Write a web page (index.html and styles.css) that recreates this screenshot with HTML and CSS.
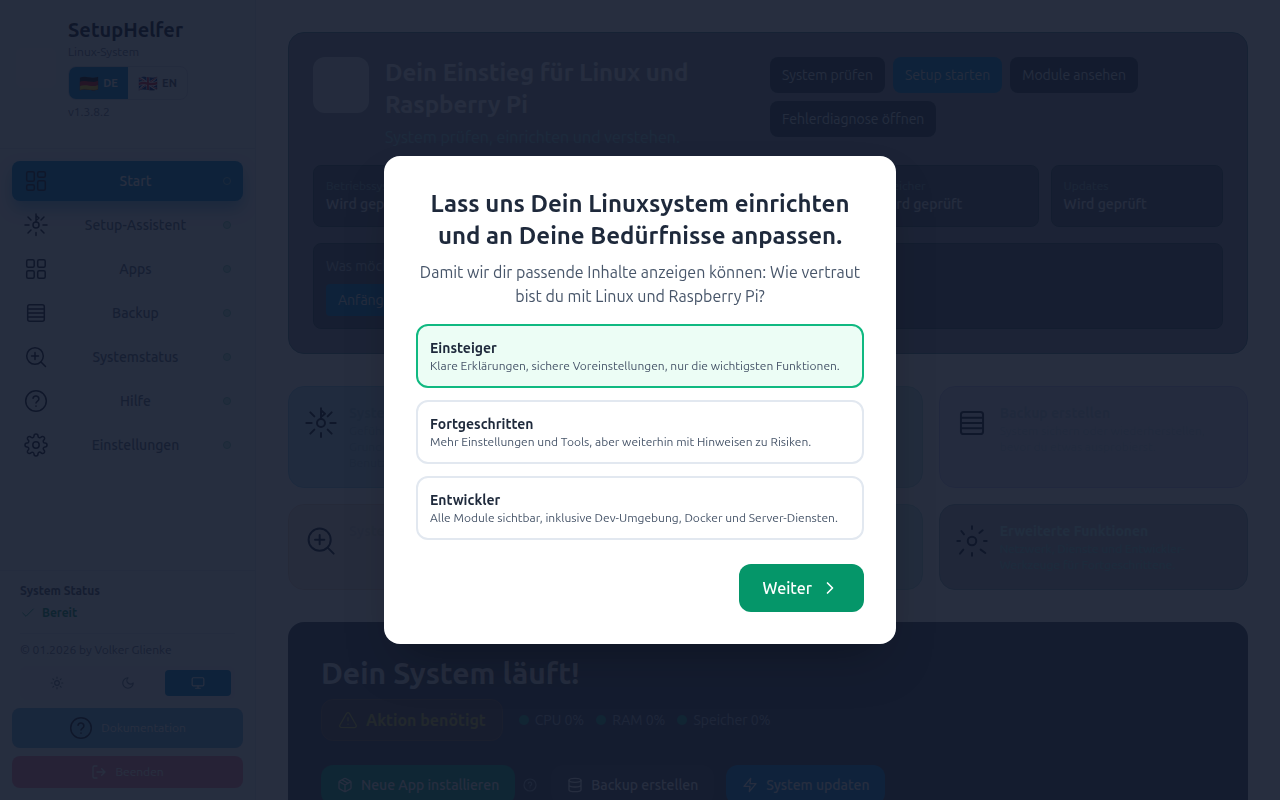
FILE: index.html
```html
<!DOCTYPE html>
<html lang="de">
<head>
<meta charset="UTF-8" />
<meta name="viewport" content="width=device-width, initial-scale=1" />
<title>SetupHelfer</title>
<link rel="stylesheet" href="styles.css">
</head>
<body>

<!-- shared icons -->
<svg class="sprite" aria-hidden="true">
  <symbol id="i-dashboard" viewBox="0 0 24 24"><rect x="2.7" y="2.7" width="7.6" height="9.6" rx="1.5"/><rect x="13.7" y="2.7" width="7.6" height="5.6" rx="1.5"/><rect x="13.7" y="11.7" width="7.6" height="9.6" rx="1.5"/><rect x="2.7" y="15.7" width="7.6" height="5.6" rx="1.5"/></symbol>
  <symbol id="i-wizard" viewBox="0 0 24 24"><circle cx="12" cy="12" r="3"/><path d="M12 1v8M12 2.500l3 2.500-3 2.500M12 19.500v3M1 12h4M19 12h4M4 4l3 3M20 4l-3 3M4 20l3-3M20 20l-3-3"/></symbol>
  <symbol id="i-apps" viewBox="0 0 24 24"><rect x="2.700" y="2.700" width="7.500" height="7.500" rx="1.500"/><rect x="13.700" y="2.700" width="7.500" height="7.500" rx="1.500"/><rect x="2.700" y="13.700" width="7.500" height="7.500" rx="1.500"/><rect x="13.700" y="13.700" width="7.500" height="7.500" rx="1.500"/></symbol>
  <symbol id="i-backup" viewBox="0 0 24 24"><rect x="3.700" y="3.700" width="16.600" height="16.600" rx="2"/><path d="M4 8h16M4 12h16M4 16h16"/></symbol>
  <symbol id="i-search" viewBox="0 0 24 24"><circle cx="11" cy="11" r="8.300"/><path d="M17 17l4.500 4.500M11 7.500v7M7.500 11h7"/></symbol>
  <symbol id="i-help" viewBox="0 0 24 24"><circle cx="12" cy="12" r="10.300"/><path d="M9 9.300a3 3 0 0 1 5.900.8c0 2-2.900 2.400-2.900 4M12 17v.2"/></symbol>
  <symbol id="i-gear" viewBox="0 0 24 24"><circle cx="12" cy="12" r="3.200"/><path d="M19.400 15a1.700 1.700 0 0 0 .3 1.800l.1.100a2 2 0 1 1-2.800 2.800l-.1-.1a1.700 1.700 0 0 0-2.900 1.200v.2a2 2 0 1 1-4 0v-.1a1.700 1.700 0 0 0-2.900-1.200l-.1.100a2 2 0 1 1-2.800-2.800l.1-.1A1.700 1.700 0 0 0 3.100 14H3a2 2 0 1 1 0-4h.1a1.700 1.700 0 0 0 1.200-2.900l-.1-.1A2 2 0 1 1 7 4.200l.1.100A1.700 1.700 0 0 0 10 3.100V3a2 2 0 1 1 4 0v.1a1.700 1.700 0 0 0 2.900 1.200l.1-.1A2 2 0 1 1 19.800 7l-.1.100a1.700 1.700 0 0 0 1.200 2.900h.1a2 2 0 1 1 0 4h-.1a1.700 1.700 0 0 0-1.500 1z"/></symbol>
  <symbol id="i-rays" viewBox="0 0 24 24"><circle cx="12" cy="12" r="3.200"/><path d="M12 1v2M12 21v2M1 12h2M21 12h2M4 4.500l2 2.500M20 4l-2.500 2M3 21.500l2.500-3M22 21l-3.500-2.500"/></symbol>
  <symbol id="i-check" viewBox="0 0 24 24"><path d="M20 6L9 17l-5-5"/></symbol>
  <symbol id="i-sun" viewBox="0 0 24 24"><circle cx="12" cy="12" r="4"/><path d="M12 2v2M12 20v2M4.900 4.900l1.400 1.400M17.700 17.700l1.400 1.400M2 12h2M20 12h2M6.300 17.700l-1.400 1.400M19.100 4.900l-1.400 1.400"/></symbol>
  <symbol id="i-moon" viewBox="0 0 24 24"><path d="M12 3a6 6 0 0 0 9 9 9 9 0 1 1-9-9z"/></symbol>
  <symbol id="i-monitor" viewBox="0 0 24 24"><rect x="2" y="3" width="20" height="14" rx="2"/><path d="M8 21h8M12 17v4"/></symbol>
  <symbol id="i-logout" viewBox="0 0 24 24"><path d="M9 21H5a2 2 0 0 1-2-2V5a2 2 0 0 1 2-2h4M16 17l5-5-5-5M21 12H9"/></symbol>
  <symbol id="i-warn" viewBox="0 0 24 24"><path d="M21.700 18l-8-14a2 2 0 0 0-3.400 0l-8 14A2 2 0 0 0 4 21h16a2 2 0 0 0 1.700-3zM12 9v4M12 17v.1"/></symbol>
  <symbol id="i-box" viewBox="0 0 24 24"><path d="M21 8a2 2 0 0 0-1-1.700l-7-4a2 2 0 0 0-2 0l-7 4A2 2 0 0 0 3 8v8a2 2 0 0 0 1 1.700l7 4a2 2 0 0 0 2 0l7-4a2 2 0 0 0 1-1.700zM3.300 7L12 12l8.700-5M12 22V12M7.500 4.300l9 5.100"/></symbol>
  <symbol id="i-database" viewBox="0 0 24 24"><ellipse cx="12" cy="5" rx="9" ry="3"/><path d="M3 5v14c0 1.700 4 3 9 3s9-1.300 9-3V5M3 12c0 1.700 4 3 9 3s9-1.300 9-3"/></symbol>
  <symbol id="i-bolt" viewBox="0 0 24 24"><path d="M13 2L3 14h9l-1 8 10-12h-9z"/></symbol>
  <symbol id="i-chevron" viewBox="0 0 24 24"><path d="M9 18l6-6-6-6"/></symbol>
</svg>

<div class="app">
  <aside class="sidebar">
    <header class="brand">
      <div class="brand-logo"></div>
      <div class="brand-info">
        <h1>SetupHelfer</h1>
        <p>Linux-System</p>
        <div class="lang">
          <button class="active"><span class="flag">🇩🇪</span>DE</button>
          <button><span class="flag">🇬🇧</span>EN</button>
        </div>
        <p>v1.3.8.2</p>
      </div>
    </header>

    <nav class="nav">
      <button class="active"><svg class="icon"><use href="#i-dashboard"/></svg><span>Start</span><i class="dot"></i></button>
      <button><svg class="icon"><use href="#i-wizard"/></svg><span>Setup-Assistent</span><i class="dot"></i></button>
      <button><svg class="icon"><use href="#i-apps"/></svg><span>Apps</span><i class="dot"></i></button>
      <button><svg class="icon"><use href="#i-backup"/></svg><span>Backup</span><i class="dot"></i></button>
      <button><svg class="icon"><use href="#i-search"/></svg><span>Systemstatus</span><i class="dot"></i></button>
      <button><svg class="icon"><use href="#i-help"/></svg><span>Hilfe</span><i class="dot"></i></button>
      <button><svg class="icon"><use href="#i-gear"/></svg><span>Einstellungen</span><i class="dot"></i></button>
    </nav>

    <footer class="side-footer">
      <div class="status">
        <strong>System Status</strong>
        <p class="ready"><svg class="icon"><use href="#i-check"/></svg>Bereit</p>
      </div>
      <p class="copyright">© 01.2026 by Volker Glienke</p>
      <div class="theme">
        <button aria-label="Hell"><svg class="icon"><use href="#i-sun"/></svg></button>
        <button aria-label="Dunkel"><svg class="icon"><use href="#i-moon"/></svg></button>
        <button aria-label="System" class="active"><svg class="icon"><use href="#i-monitor"/></svg></button>
      </div>
      <button class="docs"><svg class="icon"><use href="#i-help"/></svg>Dokumentation</button>
      <button class="quit"><svg class="icon"><use href="#i-logout"/></svg>Beenden</button>
    </footer>
  </aside>

  <main class="main">
    <section class="hero">
      <div class="hero-top">
        <div class="hero-intro">
          <div class="hero-logo"></div>
          <div>
            <h2>Dein Einstieg für Linux und Raspberry Pi</h2>
            <p>System prüfen, einrichten und verstehen.</p>
          </div>
        </div>
        <div class="hero-actions">
          <button>System prüfen</button>
          <button class="primary">Setup starten</button>
          <button>Module ansehen</button>
          <button>Fehlerdiagnose öffnen</button>
        </div>
      </div>
      <div class="stats">
        <div class="stat"><span>Betriebssystem</span><b>Wird geprüft</b></div>
        <div class="stat"><span>Netzwerk</span><b>Wird geprüft</b></div>
        <div class="stat"><span>Internet</span><b>Wird geprüft</b></div>
        <div class="stat"><span>Speicher</span><b>Wird geprüft</b></div>
        <div class="stat"><span>Updates</span><b>Wird geprüft</b></div>
      </div>
      <div class="goal">
        <p>Was möchtest du tun?</p>
        <button>Anfänger</button>
      </div>
    </section>

    <section class="cards">
      <a href="#" class="card sky"><svg class="icon"><use href="#i-wizard"/></svg><div><h3>System einrichten</h3><p>Geführte Einrichtung mit<br>Grundeinstellungen für<br>Benutzer und System.</p></div></a>
      <a href="#" class="card mint"><svg class="icon"><use href="#i-apps"/></svg><div><h3>Apps</h3><p>Programme installieren.</p></div></a>
      <a href="#" class="card violet"><svg class="icon"><use href="#i-backup"/></svg><div><h3>Backup erstellen</h3><p>System sichern oder wiederherstellen, bevor du etwas ausprobierst.</p></div></a>
      <a href="#" class="card amber"><svg class="icon"><use href="#i-search"/></svg><div><h3>Systemstatus</h3></div></a>
      <a href="#" class="card mint"><svg class="icon"><use href="#i-help"/></svg><div><h3>Hilfe</h3></div></a>
      <a href="#" class="card slate"><svg class="icon"><use href="#i-rays"/></svg><div><h3>Erweiterte Funktionen</h3><p>Netzwerk, Dienste und Entwickler-Werkzeuge für Fortgeschrittene.</p></div></a>
    </section>

    <section class="system">
      <h2>Dein System läuft!</h2>
      <div class="system-row">
        <div class="alert"><svg class="icon"><use href="#i-warn"/></svg>Aktion benötigt</div>
        <ul class="meters">
          <li>CPU 0%</li>
          <li>RAM 0%</li>
          <li>Speicher 0%</li>
        </ul>
      </div>
      <div class="system-actions">
        <button class="green"><svg class="icon"><use href="#i-box"/></svg>Neue App installieren</button>
        <svg class="icon hint"><use href="#i-help"/></svg>
        <button class="dark"><svg class="icon"><use href="#i-database"/></svg>Backup erstellen</button>
        <button class="blue"><svg class="icon"><use href="#i-bolt"/></svg>System updaten</button>
      </div>
    </section>
  </main>
</div>

<div class="overlay">
  <div class="dialog" role="dialog" aria-modal="true" aria-labelledby="dialog-title">
    <h2 id="dialog-title">Lass uns Dein Linuxsystem einrichten und an Deine Bedürfnisse anpassen.</h2>
    <p class="lead">Damit wir dir passende Inhalte anzeigen können: Wie vertraut bist du mit Linux und Raspberry Pi?</p>
    <div class="options">
      <button class="option selected"><b>Einsteiger</b><span>Klare Erklärungen, sichere Voreinstellungen, nur die wichtigsten Funktionen.</span></button>
      <button class="option"><b>Fortgeschritten</b><span>Mehr Einstellungen und Tools, aber weiterhin mit Hinweisen zu Risiken.</span></button>
      <button class="option"><b>Entwickler</b><span>Alle Module sichtbar, inklusive Dev-Umgebung, Docker und Server-Diensten.</span></button>
    </div>
    <button class="next">Weiter<svg class="icon"><use href="#i-chevron"/></svg></button>
  </div>
</div>

<script>
  const options = document.querySelectorAll('.option');
  options.forEach(function (option) {
    option.addEventListener('click', function () {
      options.forEach(o => o.classList.remove('selected'));
      option.classList.add('selected');
    });
  });
</script>

</body>
</html>
```
FILE: styles.css
```css
* {
  box-sizing: border-box;
  margin: 0;
  padding: 0;
}
body {
  font-family: Ubuntu, Roboto, sans-serif;
  font-size: 14px;
  line-height: 20px;
  color: #1e293b;
  background: #f8fafc;
  overflow: hidden;
}
button {
  font: inherit;
  color: inherit;
  border: none;
  background: none;
  cursor: pointer;
}
.sprite {
  display: none;
}
.icon {
  width: 16px;
  height: 16px;
  flex: none;
  fill: none;
  stroke: currentColor;
  stroke-width: 2;
  stroke-linecap: round;
  stroke-linejoin: round;
}
.app {
  display: flex;
  height: 100vh;
}

/* sidebar */
.sidebar {
  width: 256px;
  flex: none;
  display: flex;
  flex-direction: column;
  background: #f6f7fb;
  border-right: 1px solid #e2e8f0;
}
.brand {
  display: flex;
  align-items: center;
  gap: 12px;
  height: 149px;
  padding: 16px 16px 28px;
  border-bottom: 1px solid #e2e8f0;
}
.brand-logo {
  width: 40px;
  height: 40px;
  border-radius: 8px;
  background: #fff;
}
.brand h1 {
  font-size: 20px;
  font-weight: 700;
  line-height: 28px;
  color: #0f172a;
}
.brand p {
  font-size: 12px;
  line-height: 16px;
  color: #64748b;
}
.lang {
  display: flex;
  width: 120px;
  height: 34px;
  margin: 6px 0 4px;
  border: 1px solid #d5dde8;
  border-radius: 8px;
  overflow: hidden;
}
.lang button {
  flex: 1;
  display: flex;
  align-items: center;
  justify-content: center;
  gap: 4px;
  font-size: 11px;
  font-weight: 700;
  color: #475569;
}
.lang button.active {
  background: #0284c7;
  color: #f8fafc;
}
.flag {
  font-size: 16px;
}
.nav {
  display: flex;
  flex-direction: column;
  gap: 4px;
  padding: 12px;
}
.nav button {
  display: flex;
  align-items: center;
  gap: 12px;
  height: 40px;
  padding: 0 12px;
  border-radius: 8px;
  font-weight: 500;
  color: #56697f;
}
.nav span {
  flex: 1;
}
.nav .icon {
  width: 24px;
  height: 24px;
  stroke-width: 1.5;
  color: #0f172a;
}
.nav .active {
  background: #0284c7;
  color: #f8fafc;
  box-shadow: 0 8px 16px #7cbde3;
}
.nav .active .icon {
  color: #0f172a;
}
.dot {
  width: 8px;
  height: 8px;
  border: 1px solid #7acbb8;
  border-radius: 50%;
  background: #c4e8e0;
}
.nav .active .dot {
  border-color: #7cc4cf;
  background: none;
}
.side-footer {
  margin-top: auto;
  display: flex;
  flex-direction: column;
  gap: 8px;
  padding: 10px 12px 12px;
  border-top: 1px solid #e2e8f0;
  font-size: 12px;
}
.status {
  margin: 0 8px;
  padding-bottom: 10px;
  border-bottom: 1px solid #e2e8f0;
}
.status strong {
  color: #475569;
}
.ready {
  display: flex;
  gap: 6px;
  align-items: center;
  margin-top: 2px;
  font-weight: 700;
  color: #059669;
}
.ready .icon {
  color: #10b981;
  stroke-width: 1.5;
}
.copyright {
  margin: 0 8px;
  line-height: 16px;
  color: #64748b;
}
.theme {
  display: flex;
  margin: 0 8px;
  padding: 4px;
  gap: 5px;
  border-radius: 8px;
  background: #f1f3f8;
  color: #64748b;
}
.theme button {
  flex: 1;
  height: 26px;
  border-radius: 4px;
}
.theme .icon {
  width: 14px;
  height: 14px;
  display: block;
  margin: auto;
}
.theme .active {
  background: #0284c7;
  color: #f8fafc;
}
.docs,
.quit {
  display: flex;
  align-items: center;
  justify-content: center;
  gap: 8px;
  border-radius: 8px;
}
.docs {
  height: 40px;
  background: #67b3db;
  color: #ffffff;
}
.docs .icon {
  width: 24px;
  height: 24px;
  color: #0f172a;
  stroke-width: 1.5;
}
.quit {
  height: 32px;
  background: #ee88a2;
  color: #ffffff;
}

/* main area */
.main {
  flex: 1;
  min-width: 0;
  padding: 32px;
  overflow: hidden;
  background: #fbfcff;
}
.hero {
  padding: 24px;
  border: 1px solid #52808f;
  border-radius: 16px;
  background: #8d93a0;
}
.hero-top {
  display: grid;
  grid-template-columns: 1fr 453px;
  gap: 24px;
}
.hero-intro {
  display: flex;
  gap: 16px;
}
.hero-logo {
  width: 56px;
  height: 56px;
  flex: none;
  border-radius: 12px;
  background: #dde2ea;
}
.hero h2 {
  font-size: 24px;
  line-height: 32px;
  font-weight: 700;
  color: #f1f5f9;
}
.hero-intro p {
  margin-top: 4px;
  font-size: 16px;
  line-height: 24px;
  color: #94d8e0;
}
.hero-actions {
  display: flex;
  flex-wrap: wrap;
  align-content: flex-start;
  gap: 8px;
}
.hero-actions button {
  height: 36px;
  padding: 0 12px;
  border-radius: 8px;
  background: #334155;
  color: #dfe5ec;
}
.hero-actions .primary {
  background: #0284c7;
  color: #dfe5ec;
}
.stats {
  display: grid;
  grid-template-columns: repeat(5, 1fr);
  gap: 12px;
  margin: 16px 0;
}
.stat,
.goal {
  padding: 12px;
  border: 1px solid #3b5560;
  border-radius: 8px;
  background: #586275;
}
.stat span {
  display: block;
  font-size: 12px;
  line-height: 16px;
  color: #84b0b8;
}
.stat b {
  display: block;
  font-weight: 500;
  color: #e2e8f0;
}
.goal p {
  color: #b4c2d0;
}
.goal button {
  height: 32px;
  margin-top: 8px;
  padding: 0 12px;
  border-radius: 4px;
  background: #0284c7;
  color: #e2e8f0;
}
.cards {
  display: grid;
  grid-template-columns: repeat(3, 1fr);
  gap: 16px;
  margin: 32px 0;
}
.card {
  display: flex;
  gap: 12px;
  min-height: 86px;
  padding: 16px;
  border: 1px solid;
  border-radius: 16px;
  text-decoration: none;
}
.card .icon {
  width: 32px;
  height: 32px;
  margin-top: 4px;
  stroke-width: 1.5;
  color: #0f172a;
}
.card h3 {
  font-size: 14px;
  font-weight: 700;
}
.card p {
  font-size: 12px;
  line-height: 16px;
}
.sky {
  background: #b9def0;
  border-color: #8fcdeb;
  color: #9cc6dc;
}
.mint {
  background: #c8e6e6;
  border-color: #acdcd8;
  color: #b5d8d6;
}
.violet {
  background: #dfdff2;
  border-color: #c3c4f0;
  color: #c0d4e2;
}
.violet h3 {
  color: #b2cadc;
}
.amber {
  background: #f4ebe2;
  border-color: #ecd2c4;
  color: #dcd8d2;
}
.slate {
  background: #b2b7c2;
  border-color: #8aabb4;
  color: #8ce4e4;
}
.slate h3 {
  color: #c0fafa;
}

/* system panel */
.system {
  padding: 33px;
  border-radius: 16px;
  background: #414b60;
}
.system h2 {
  font-size: 30px;
  line-height: 36px;
  font-weight: 700;
  color: #e2e8f0;
}
.system-row {
  display: flex;
  align-items: center;
  gap: 16px;
  margin-top: 8px;
}
.alert {
  display: flex;
  align-items: center;
  gap: 8px;
  height: 42px;
  padding: 0 16px;
  border: 1px solid #7a6450;
  border-radius: 12px;
  background: #5d5455;
  font-size: 16px;
  font-weight: 700;
  color: #c8c040;
}
.alert .icon {
  width: 20px;
  height: 20px;
  stroke-width: 1.5;
}
.meters {
  display: flex;
  gap: 12px;
  list-style: none;
  color: #a4b0c0;
}
.meters li {
  display: flex;
  align-items: center;
  gap: 6px;
}
.meters li::before {
  content: "";
  width: 10px;
  height: 10px;
  border-radius: 50%;
  background: #1ea487;
}
.system-actions {
  display: flex;
  align-items: center;
  gap: 8px;
  margin-top: 24px;
}
.system-actions button {
  display: flex;
  align-items: center;
  gap: 8px;
  height: 40px;
  padding: 0 16px;
  border-radius: 12px;
  font-weight: 500;
  color: #f1f5f9;
}
.system-actions .green {
  background: #10a98a;
}
.system-actions .dark {
  margin: 0 4px 0 6px;
  background: #485064;
}
.system-actions .blue {
  background: #0d88d8;
}
.hint {
  width: 14px;
  height: 14px;
  color: #94a3b8;
}

/* dialog */
.overlay {
  position: fixed;
  inset: 0;
  display: flex;
  align-items: center;
  justify-content: center;
  padding: 16px;
  background: rgba(15, 23, 42, 0.9);
}
.dialog {
  display: flex;
  flex-direction: column;
  width: 100%;
  max-width: 512px;
  padding: 32px;
  border-radius: 16px;
  background: #fff;
  box-shadow: 0 25px 50px -12px rgba(0, 0, 0, 0.25);
}
.dialog h2 {
  font-size: 24px;
  line-height: 32px;
  font-weight: 700;
  text-align: center;
}
.lead {
  margin: 8px 0 16px;
  font-size: 16px;
  line-height: 24px;
  text-align: center;
  color: #475569;
}
.options {
  display: flex;
  flex-direction: column;
  gap: 12px;
}
.option {
  padding: 12px;
  border: 2px solid #e2e8f0;
  border-radius: 12px;
  text-align: left;
}
.option b {
  display: block;
  font-weight: 700;
}
.option span {
  display: block;
  font-size: 12px;
  line-height: 16px;
  color: #475569;
}
.option.selected {
  border-color: #10b981;
  background: #ecfdf5;
}
.next {
  display: flex;
  align-items: center;
  align-self: flex-end;
  gap: 8px;
  margin-top: 24px;
  padding: 12px 24px;
  border-radius: 12px;
  background: #059669;
  color: #fff;
  font-size: 16px;
  line-height: 24px;
  font-weight: 500;
}
.next .icon {
  width: 20px;
  height: 20px;
}
```
